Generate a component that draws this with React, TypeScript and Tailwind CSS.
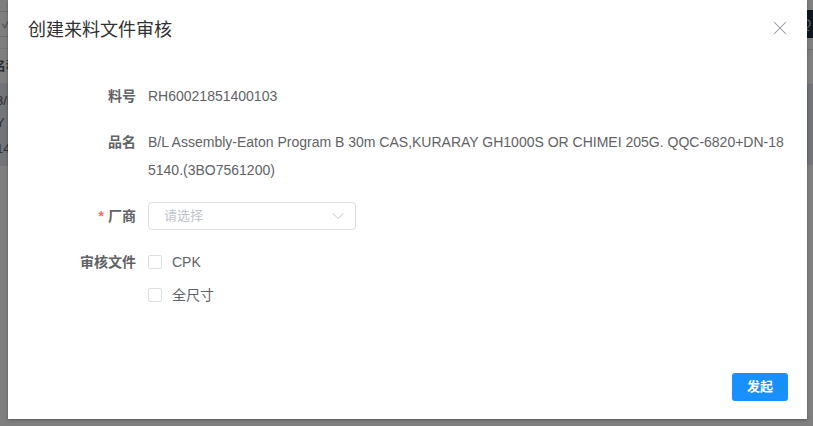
import { X, ChevronDown } from "lucide-react";

function BackgroundPage() {
  return (
    <div className="absolute inset-0 flex justify-between text-[13px] text-[#606266]">
      <div className="flex w-[60px] flex-col">
        <div className="h-[12px] border-b border-[#dcdfe6]" />
        <div className="flex h-[25px] items-center border-b border-[#dcdfe6] pl-[2px] text-[#909399]">✓</div>
        <div className="h-[12px] border-b border-[#ebeef5]" />
        <div className="flex h-[35px] items-center border-b border-[#ebeef5] ml-[-7px] font-bold">名称</div>
        <div className="flex flex-col bg-[#e4e9f2] ml-[-4px] leading-[22px] pt-[6px] pb-[6px]">
          <span>3/L</span>
          <span>Y C</span>
          <span className="pt-[4px]">14</span>
        </div>
      </div>
      <div className="flex w-[30px] flex-col">
        <div className="h-[10px]" />
        <div className="flex h-[28px] items-center bg-[#1f2d3d] pl-[18px] text-[#a8c8e8]">Q</div>
        <div className="h-[12px] border-b border-[#dcdfe6]" />
        <div className="h-[35px] border-b border-[#dcdfe6]" />
        <div className="h-[80px] bg-[#e4e9f2]" />
      </div>
    </div>
  );
}

function FormRow({
  label,
  required,
  children,
}: {
  label: string;
  required?: boolean;
  children: React.ReactNode;
}) {
  return (
    <div className="flex">
      <div className="w-[140px] shrink-0 pr-3 text-right text-[14px] font-bold leading-[28px] text-[#606266]">
        {required && <span className="mr-[4px] text-[#f56c6c]">*</span>}
        {label}
      </div>
      <div className="min-w-0 flex-1">{children}</div>
    </div>
  );
}

function Checkbox({ label }: { label: string }) {
  return (
    <label className="flex h-[28px] items-center gap-[10px] text-[14px] text-[#606266]">
      <span className="h-[14px] w-[14px] rounded-[2px] border border-[#dcdfe6] bg-white" />
      {label}
    </label>
  );
}

export default function App() {
  return (
    <div className="relative h-[426px] w-[813px] overflow-hidden bg-white font-['Liberation_Sans','Noto_Sans_CJK_SC',sans-serif]">
      <BackgroundPage />
      <div className="absolute inset-0 bg-black/50" />
      <div className="absolute left-[8px] top-0 flex h-[419px] w-[799px] flex-col bg-white shadow-[0_1px_3px_rgba(0,0,0,0.3)]">
        <div className="flex items-center justify-between pl-[20px] pr-[16px] pt-[18px]">
          <h2 className="text-[18px] leading-[24px] text-[#303133]">创建来料文件审核</h2>
          <X className="-mt-[4px] h-[22px] w-[22px] text-[#909399]" strokeWidth={1.1} />
        </div>

        <div className="mt-[40px] flex flex-col gap-[18px] pr-[20px]">
          <FormRow label="料号">
            <div className="text-[14px] leading-[28px] text-[#606266]">RH60021851400103</div>
          </FormRow>
          <FormRow label="品名">
            <div className="break-all text-[14px] leading-[28px] text-[#606266]">
              B/L Assembly-Eaton Program B 30m CAS,KURARAY GH1000S OR CHIMEI 205G. QQC-6820+DN-185140.(3BO7561200)
            </div>
          </FormRow>
          <FormRow label="厂商" required>
            <div className="flex h-[28px] w-[208px] items-center justify-between rounded-[4px] border border-[#dcdfe6] pl-[15px] pr-[7px]">
              <span className="text-[13px] text-[#c0c4cc]">请选择</span>
              <ChevronDown className="h-[20px] w-[20px] text-[#c0c4cc]" strokeWidth={1.1} />
            </div>
          </FormRow>
          <FormRow label="审核文件">
            <div className="flex flex-col gap-[5px]">
              <Checkbox label="CPK" />
              <Checkbox label="全尺寸" />
            </div>
          </FormRow>
        </div>

        <div className="mt-auto flex justify-end pb-[18px] pr-[19px]">
          <button className="h-[28px] w-[56px] rounded-[3px] bg-[#1890ff] text-[13px] font-bold text-white">
            发起
          </button>
        </div>
      </div>
    </div>
  );
}
